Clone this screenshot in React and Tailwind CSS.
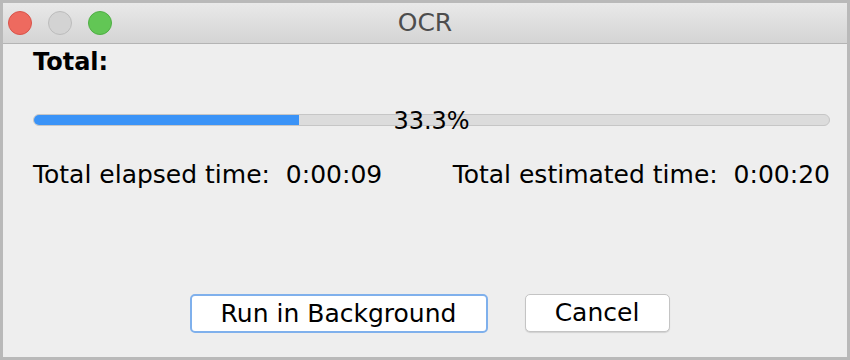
import React from 'react';

function TrafficLight({ color, border }) {
  return <span className={`block w-[24px] h-[24px] rounded-full border ${color} ${border}`}></span>;
}

export default function App() {
  const progress = 33.3;

  return (
    <div className="w-[850px] h-[360px] bg-[#b9b9b9] p-[3px] font-['DejaVu_Sans',sans-serif]">
      <div className="flex flex-col w-full h-full bg-[#eeeeee]">
        {/* title bar */}
        <div className="relative flex items-center h-[41px] px-[5px] gap-[16px] bg-gradient-to-b from-[#e9e9e9] to-[#d4d4d4] border-b border-[#b4b4b4]">
          <TrafficLight color="bg-[#ee6a5f]" border="border-[#d9534a]" />
          <TrafficLight color="bg-[#d3d3d3]" border="border-[#bcbcbc]" />
          <TrafficLight color="bg-[#62c655]" border="border-[#4fae44]" />
          <span className="absolute inset-0 flex items-center justify-center text-[25px] text-[#4d4d4d]">OCR</span>
        </div>

        <div className="flex flex-col flex-1 pl-[30px] pr-[17px]">
          <div className="mt-[3px] text-[24px] font-bold text-black leading-[30px]">Total:</div>

          <div className="relative mt-[37px] h-[12px]">
            <div className="h-full rounded-full bg-[#dcdcdc] border border-[#c6c6c6] overflow-hidden">
              <div className="h-full bg-[#3a93f7]" style={{ width: `${progress}%` }}></div>
            </div>
            <span className="absolute inset-x-0 top-[-8px] text-center text-[24px] leading-[30px] text-black">33.3%</span>
          </div>

          <div className="mt-[34px] flex justify-between text-[25px] leading-[30px] text-black whitespace-pre">
            <span>Total elapsed time:  0:00:09</span>
            <span>Total estimated time:  0:00:20</span>
          </div>

          <div className="mt-auto mb-[24px] flex justify-center gap-[37px] pr-[4px]">
            <button className="w-[298px] h-[39px] rounded-[5px] bg-white border-2 border-[#7fb0ec] text-[25px] leading-[30px] text-black">Run in Background</button>
            <button className="w-[145px] h-[38px] rounded-[5px] bg-white border border-[#c4c4c4] text-[25px] leading-[30px] text-black shadow-[0_1px_1px_rgba(0,0,0,0.12)]">Cancel</button>
          </div>
        </div>
      </div>
    </div>
  );
}
